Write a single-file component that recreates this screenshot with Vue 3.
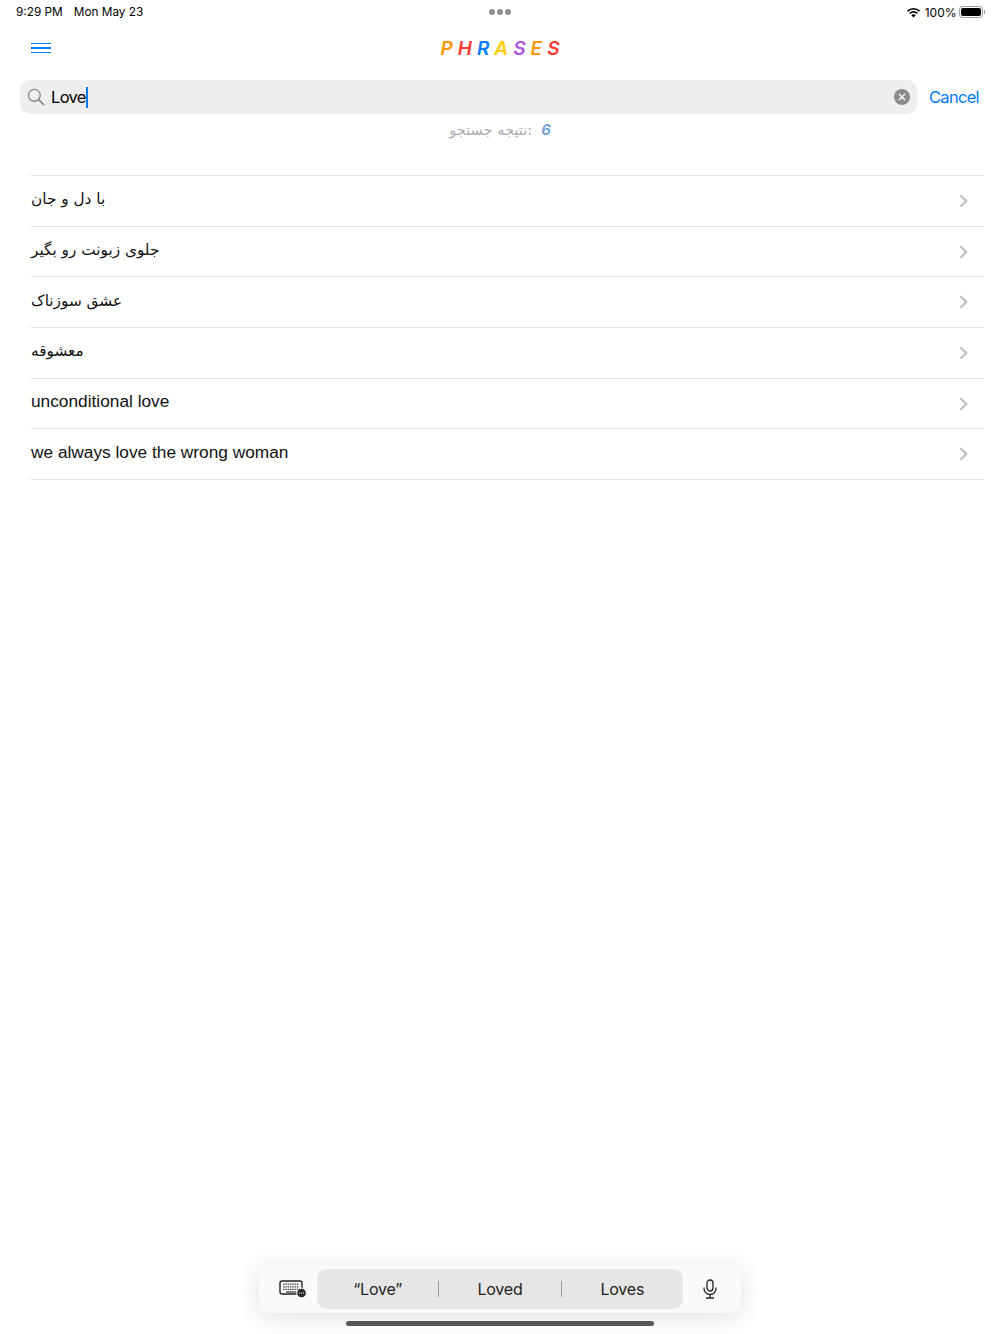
<script setup>
const titleLetters = [
  { ch: "P", color: "#ff9500" },
  { ch: "H", color: "#ff3b30" },
  { ch: "R", color: "#007aff" },
  { ch: "A", color: "#ffcc00" },
  { ch: "S", color: "#af52de" },
  { ch: "E", color: "#ff9500" },
  { ch: "S", color: "#ff3b30" },
];

const results = [
  { text: "با دل و جان", fa: true },
  { text: "جلوی زبونت رو بگیر", fa: true },
  { text: "عشق سوزناک", fa: true },
  { text: "معشوقه", fa: true },
  { text: "unconditional love", fa: false },
  { text: "we always love the wrong woman", fa: false },
];
</script>

<template>
  <div class="page">
    <div class="status-bar">
      <div class="status-left">
        <span>9:29 PM</span>
        <span>Mon May 23</span>
      </div>
      <div class="dots"><i></i><i></i><i></i></div>
      <div class="status-right">
        <svg width="15" height="11" viewBox="0 0 14 11">
          <path d="M1 4.2a8.6 8.6 0 0 1 12 0" fill="none" stroke="#000" stroke-width="1.7" />
          <path d="M3.2 6.4a5.5 5.5 0 0 1 7.6 0" fill="none" stroke="#000" stroke-width="1.7" />
          <path d="M7 10.6 4.9 8.3a3 3 0 0 1 4.2 0z" fill="#000" />
        </svg>
        <span class="percent">100%</span>
        <div class="battery"><div class="battery-fill"></div></div>
        <div class="battery-cap"></div>
      </div>
    </div>

    <header class="nav">
      <div class="menu"><i></i><i></i><i></i></div>
      <div class="title">
        <span v-for="(l, i) in titleLetters" :key="i" :style="{ color: l.color }">{{ l.ch }}</span>
      </div>
    </header>

    <div class="search-row">
      <div class="search-box">
        <svg width="18" height="18" viewBox="0 0 18 18">
          <circle cx="7.3" cy="7.3" r="5.9" fill="none" stroke="#8a8a8e" stroke-width="1.4" />
          <path d="M11.7 11.7 16.6 16.6" stroke="#8a8a8e" stroke-width="1.7" stroke-linecap="round" />
        </svg>
        <span class="query">Love</span>
        <span class="caret"></span>
        <div class="clear">
          <svg width="16" height="16" viewBox="0 0 16 16">
            <circle cx="8" cy="8" r="8" fill="#8a8a8e" />
            <path d="M5.2 5.2 10.8 10.8M10.8 5.2 5.2 10.8" stroke="#eee" stroke-width="1.6" stroke-linecap="round" />
          </svg>
        </div>
      </div>
      <span class="cancel">Cancel</span>
    </div>

    <div class="count">
      <span class="count-label" dir="rtl">:نتیجه جستجو</span>
      <span class="count-num">6</span>
    </div>

    <ul class="list">
      <li v-for="item in results" :key="item.text" class="row">
        <span :class="item.fa ? 'row-fa' : 'row-en'">{{ item.text }}</span>
        <svg width="9" height="14" viewBox="0 0 9 14">
          <path d="M1.5 1.2 7.3 7 1.5 12.8" fill="none" stroke="#bdbdc0" stroke-width="2" />
        </svg>
      </li>
    </ul>

    <div class="accessory">
      <svg class="kbd" width="28" height="18" viewBox="0 0 28 18">
        <rect x="1" y="1" width="22" height="13" rx="2" fill="none" stroke="#222" stroke-width="1.4" />
        <path d="M4 4.2h16M4 6.8h16M4 9.4h16" stroke="#333" stroke-width="1.3" stroke-dasharray="1.4 .9" />
        <path d="M7 12h10" stroke="#333" stroke-width="1.2" />
        <circle cx="22.5" cy="13" r="4.8" fill="#2a2a2a" stroke="#fafafa" stroke-width="1" />
        <path d="M20 13h5" stroke="#fff" stroke-width="1" stroke-dasharray="1 1" />
      </svg>
      <div class="suggestions">
        <span>“Love”</span>
        <i></i>
        <span>Loved</span>
        <i></i>
        <span>Loves</span>
      </div>
      <svg class="mic" width="14" height="20" viewBox="0 0 14 20">
        <rect x="4" y="1" width="6" height="11" rx="3" fill="none" stroke="#222" stroke-width="1.3" />
        <path d="M1 8.5v1a6 6 0 0 0 12 0v-1M7 15.5v3M3 19h8" fill="none" stroke="#222" stroke-width="1.3" />
      </svg>
    </div>
    <div class="home-indicator"></div>
  </div>
</template>

<style>
html,
body {
  margin: 0;
  background: #fff;
}
</style>

<style scoped>
.page {
  width: 1000px;
  height: 1334px;
  display: flex;
  flex-direction: column;
  overflow: hidden;
  font-family: "Liberation Sans", "DejaVu Sans", sans-serif;
  color: #000;
}

.status-bar {
  height: 24px;
  display: grid;
  grid-template-columns: 1fr auto 1fr;
  align-items: center;
  padding: 0 15px 0 16px;
  font-family: Inter, "Liberation Sans", sans-serif;
  font-size: 11.8px;
}

.status-left {
  display: flex;
  gap: 11px;
}

.dots {
  display: flex;
  gap: 2px;
  margin-right: 1px;
}

.dots i {
  width: 6px;
  height: 6px;
  border-radius: 50%;
  background: #8e8e8e;
}

.status-right {
  display: flex;
  align-items: center;
  justify-content: flex-end;
  gap: 4px;
}

.percent {
  margin-right: -2px;
  font-size: 12px;
}

.battery {
  width: 24px;
  height: 12px;
  box-sizing: border-box;
  border: 1px solid #9a9a9a;
  border-radius: 3.5px;
  padding: 1px;
}

.battery-fill {
  height: 100%;
  background: #000;
  border-radius: 2px;
}

.battery-cap {
  width: 1.5px;
  height: 4px;
  margin-left: -3px;
  background: #9a9a9a;
}

.nav {
  height: 48px;
  display: grid;
  grid-template-columns: 1fr auto 1fr;
  align-items: center;
  padding: 0 31px;
}

.menu {
  display: flex;
  flex-direction: column;
  gap: 3px;
  width: 20px;
}

.menu i {
  height: 1.5px;
  background: #007aff;
}

.title {
  display: flex;
  gap: 5px;
  font-family: Inter, "Liberation Sans", sans-serif;
  font-size: 19px;
  font-weight: 600;
  font-style: italic;
}

.search-row {
  margin-top: 8px;
  display: flex;
  align-items: center;
  padding-left: 20px;
}

.search-box {
  width: 897px;
  height: 34px;
  box-sizing: border-box;
  display: flex;
  align-items: center;
  padding: 0 7px;
  background: #eeeeee;
  border-radius: 10px;
  font-family: Inter, "Liberation Sans", sans-serif;
  font-size: 16.5px;
  letter-spacing: -0.7px;
}

.query {
  margin-left: 6px;
}

.caret {
  width: 2px;
  height: 21px;
  background: #007aff;
}

.clear {
  display: flex;
  margin-left: auto;
}

.cancel {
  margin-left: 12px;
  color: #007aff;
  font-family: Inter, "Liberation Sans", sans-serif;
  font-size: 16.5px;
  letter-spacing: -0.7px;
}

.count {
  height: 31px;
  display: flex;
  justify-content: center;
  align-items: center;
  gap: 9px;
}

.count-label {
  color: #aeaeb2;
  font-family: "DejaVu Sans", sans-serif;
  font-size: 14.6px;
}

.count-num {
  color: #6a9fd0;
  font-family: Inter, sans-serif;
  font-size: 15px;
  font-weight: 600;
  font-style: italic;
}

.list {
  list-style: none;
  margin: 30px 16px 0 31px;
  padding: 0;
  border-top: 1px solid #e2e2e2;
}

.row {
  height: 49.7px;
  display: flex;
  align-items: center;
  justify-content: space-between;
  padding-right: 16px;
  border-bottom: 1px solid #e2e2e2;
  color: #111;
}

.row-fa {
  margin-top: -3px;
  font-family: "DejaVu Sans", sans-serif;
  font-size: 15.3px;
}

.row-en {
  margin-top: -4px;
  font-size: 17.3px;
}

.accessory {
  align-self: center;
  margin-top: auto;
  width: 482px;
  height: 48px;
  box-sizing: border-box;
  display: flex;
  align-items: center;
  padding: 0 24px 0 20px;
  background: #fafafa;
  border-radius: 10px;
  box-shadow: 0 4px 24px rgba(0, 0, 0, 0.12);
}

.suggestions {
  flex: 0 0 366px;
  height: 40px;
  margin-left: 10px;
  display: grid;
  grid-template-columns: 1fr 1px 1fr 1px 1fr;
  align-items: center;
  background: #e6e6e6;
  border-radius: 10px;
  font-family: Inter, "Liberation Sans", sans-serif;
  font-size: 16px;
  letter-spacing: -0.2px;
  color: #222;
  text-align: center;
}

.suggestions i {
  height: 16px;
  background: #9a9a9a;
}

.mic {
  margin-left: auto;
}

.home-indicator {
  align-self: center;
  width: 308px;
  height: 5px;
  margin: 8px 0;
  border-radius: 3px;
  background: #555;
}
</style>
